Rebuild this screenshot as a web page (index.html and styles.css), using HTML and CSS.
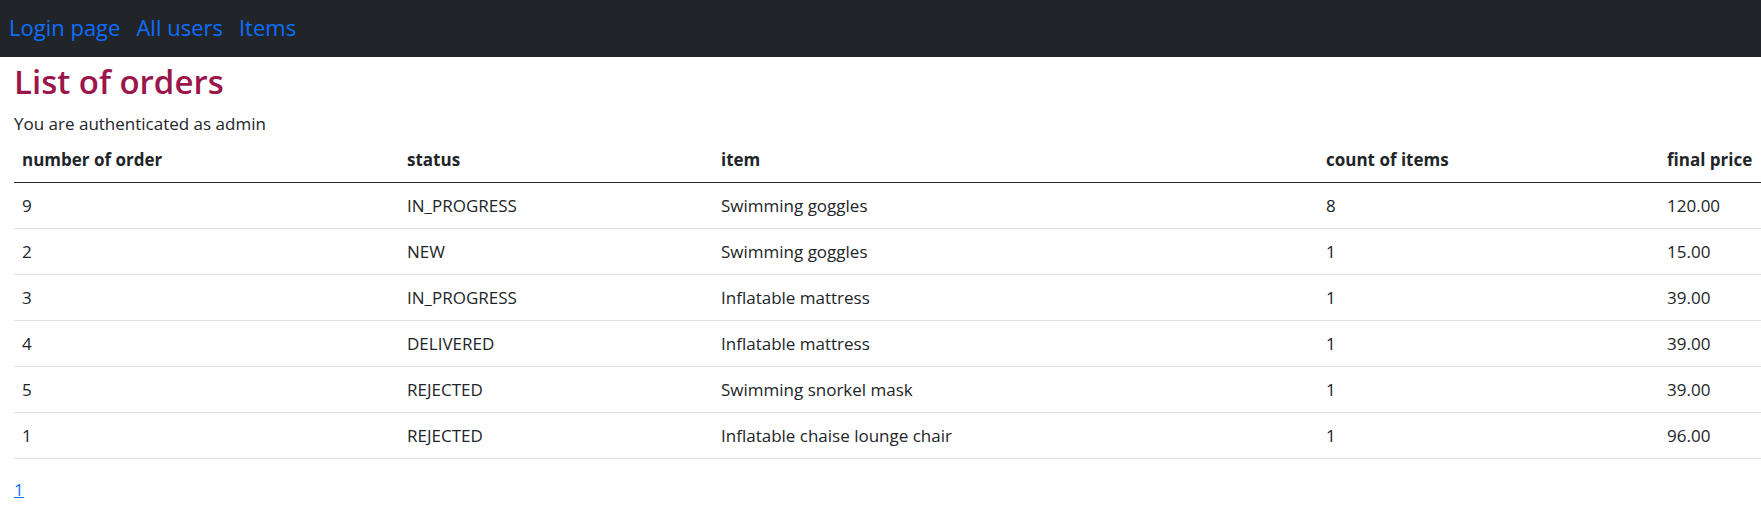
FILE: index.html
```html
<!DOCTYPE html>
<html lang="en">
<head>
<meta charset="utf-8">
<title>List of orders</title>
<link rel="stylesheet" href="styles.css">
</head>
<body>
<nav class="navbar">
  <a class="nav-link" href="#">Login page</a>
  <a class="nav-link" href="#">All users</a>
  <a class="nav-link" href="#">Items</a>
</nav>
<main class="content">
  <h2 class="title">List of orders</h2>
  <p class="auth">You are authenticated as admin</p>
  <table class="orders">
    <colgroup>
      <col class="c1"><col class="c2"><col class="c3"><col class="c4"><col class="c5">
    </colgroup>
    <thead>
      <tr><th>number of order</th><th>status</th><th>item</th><th>count of items</th><th>final price</th></tr>
    </thead>
    <tbody>
      <tr><td>9</td><td>IN_PROGRESS</td><td>Swimming goggles</td><td>8</td><td>120.00</td></tr>
      <tr><td>2</td><td>NEW</td><td>Swimming goggles</td><td>1</td><td>15.00</td></tr>
      <tr><td>3</td><td>IN_PROGRESS</td><td>Inflatable mattress</td><td>1</td><td>39.00</td></tr>
      <tr><td>4</td><td>DELIVERED</td><td>Inflatable mattress</td><td>1</td><td>39.00</td></tr>
      <tr><td>5</td><td>REJECTED</td><td>Swimming snorkel mask</td><td>1</td><td>39.00</td></tr>
      <tr><td>1</td><td>REJECTED</td><td>Inflatable chaise lounge chair</td><td>1</td><td>96.00</td></tr>
    </tbody>
  </table>
  <div class="pages"><a class="page-link" href="#">1</a></div>
</main>
</body>
</html>
```
FILE: styles.css
```css
html, body {
  margin: 0;
  padding: 0;
  overflow: hidden;
}
body {
  font-family: "Open Sans", "Noto Sans", sans-serif;
  font-size: 17px;
  line-height: 27px;
  color: #212529;
  background: #fff;
}
.navbar {
  display: flex;
  align-items: center;
  gap: 16px;
  height: 57px;
  padding: 0 0 0 9px;
  background: #212529;
  box-sizing: border-box;
}
.nav-link {
  color: #0d6efd;
  text-decoration: none;
  font-size: 22px;
  line-height: 30px;
  margin-top: -3px;
}
.content {
  padding: 0 0 0 14px;
}
.title {
  margin: 3px 0 0 0;
  font-size: 33px;
  line-height: 43px;
  font-weight: 600;
  color: #9b174b;
}
.auth {
  margin: 7px 0 0 0;
}
.orders {
  width: 1747px;
  table-layout: fixed;
  border-collapse: collapse;
}
.c1 { width: 385px; }
.c2 { width: 314px; }
.c3 { width: 605px; }
.c4 { width: 341px; }
.c5 { width: 102px; }
.orders th, .orders td {
  text-align: left;
  padding: 9px 8px;
  line-height: 27px;
  white-space: nowrap;
}
.orders th {
  font-weight: 700;
  border-bottom: 1px solid #212529;
}
.orders td {
  border-bottom: 1px solid #dee2e6;
}
.pages {
  padding-top: 17px;
}
.page-link {
  color: #0d6efd;
  text-decoration: underline;
}
```
